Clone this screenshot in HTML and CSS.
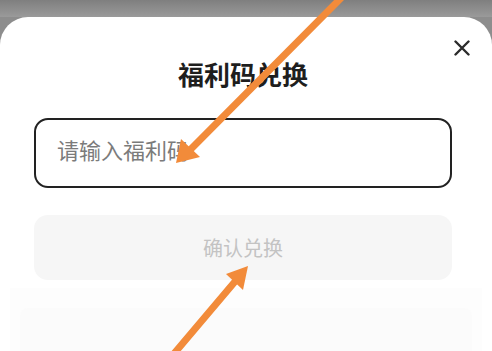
FILE: index.html
```html
<!DOCTYPE html>
<html>
<head>
    <meta charset="utf-8">
    <title>福利码兑换</title>
    <link rel="stylesheet" href="styles.css">
</head>
<body>
<div class="backdrop"></div>
<div class="sheet">
    <button class="close" aria-label="关闭">
        <svg width="18" height="16" viewBox="0 0 18 16">
            <path d="M2.5 1.5 L15.5 14.5 M15.5 1.5 L2.5 14.5" stroke="#2b2b2b" stroke-width="2.4" stroke-linecap="round"/>
        </svg>
    </button>
    <h1 class="title">福利码兑换</h1>
    <input class="code" type="text" placeholder="请输入福利码">
    <button class="confirm">确认兑换</button>
    <div class="below">
        <div class="ghost"></div>
    </div>
</div>
<svg class="marks" width="492" height="351" viewBox="0 0 492 351">
    <g stroke="#f28b3a" stroke-width="7" stroke-linecap="round" fill="#f28b3a">
        <line x1="345" y1="-6" x2="190" y2="150"/>
        <line x1="172" y1="356" x2="238" y2="278"/>
    </g>
    <g fill="#f28b3a">
        <polygon points="176,163 181,139 200,157"/>
        <polygon points="248,266 226,274 243,290"/>
    </g>
</svg>
</body>
</html>
```
FILE: styles.css
```css
body {
    margin: 0;
    width: 492px;
    height: 351px;
    overflow: hidden;
    background-color: #8d8d8d;
    font-family: "Noto Sans CJK SC", sans-serif;
    position: relative;
}

.backdrop {
    height: 17px;
    background: linear-gradient(#7f7f7f, #9a9a9a);
}

.sheet {
    position: relative;
    background-color: #ffffff;
    border-radius: 28px 28px 0 0;
    padding: 39px 40px 0 34px;
    height: 295px;
    display: flex;
    flex-direction: column;
    align-items: stretch;
}

.sheet > * {
    flex-shrink: 0;
}

.close {
    position: absolute;
    top: 23px;
    right: 21px;
    border: none;
    background: none;
    padding: 0;
    width: 18px;
    height: 16px;
}

.title {
    margin: 0;
    font-size: 26px;
    line-height: 36px;
    font-weight: bold;
    color: #1e1e1e;
    text-align: center;
}

.code {
    margin-top: 26px;
    height: 70px;
    box-sizing: border-box;
    border: 2px solid #222;
    border-radius: 14px;
    padding: 0 0 8px 21px;
    font-family: "Noto Sans CJK SC", sans-serif;
    font-size: 22px;
    color: #333;
    outline: none;
}

.code::placeholder {
    color: #7b7b7b;
}

.confirm {
    margin-top: 27px;
    height: 65px;
    border: none;
    border-radius: 14px;
    background-color: #f6f6f6;
    color: #c3c3c3;
    font-family: "Noto Sans CJK SC", sans-serif;
    font-size: 20px;
}

.below {
    margin: 8px -30px 0 -24px;
    flex: 1 1 auto;
    background-color: #fdfdfd;
    padding: 20px 10px 0 10px;
}

.ghost {
    height: 60px;
    border-radius: 8px;
    background-color: #fbfbfb;
}

.marks {
    position: absolute;
    top: 0;
    left: 0;
    pointer-events: none;
}
```
